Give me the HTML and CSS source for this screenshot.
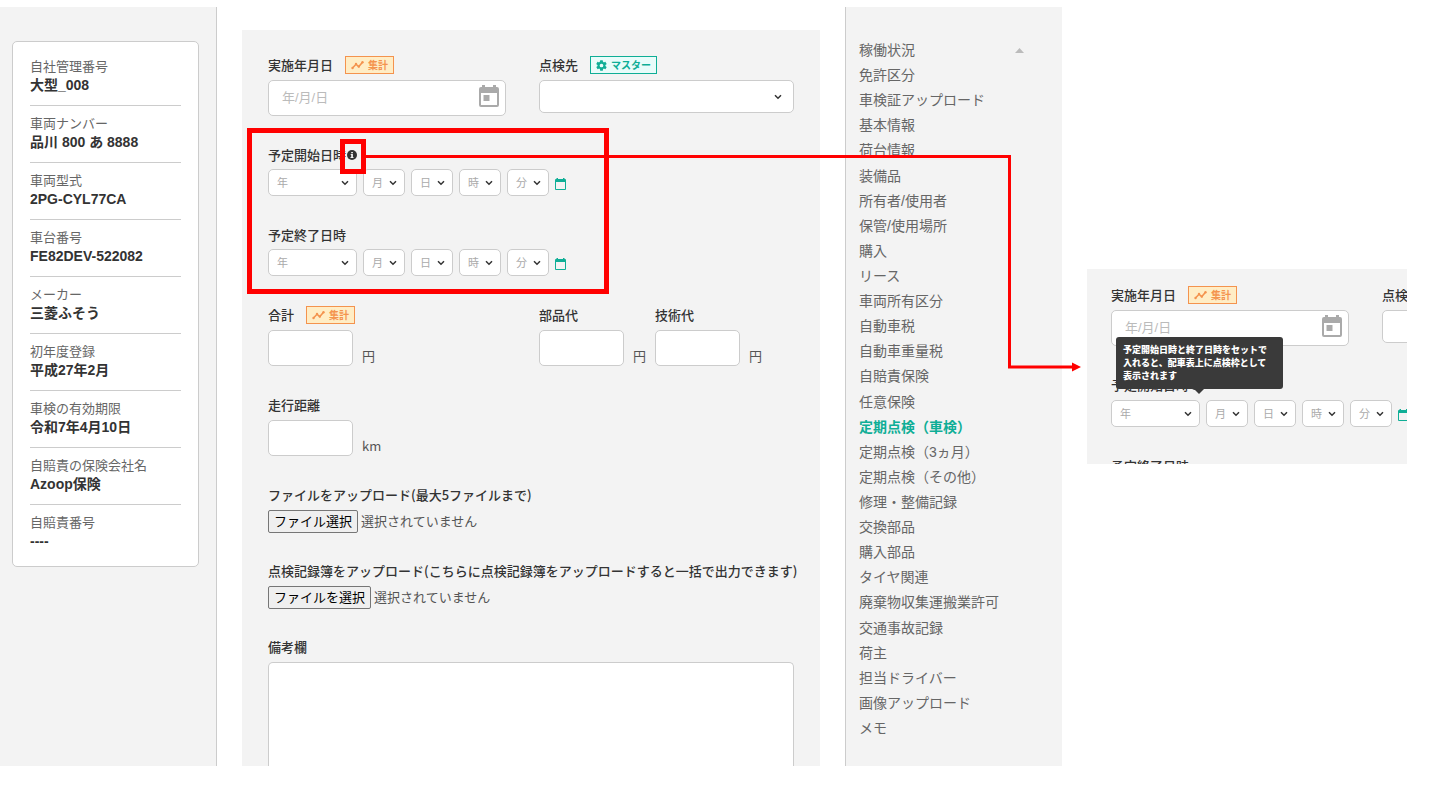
FILE: index.html
```html
<!DOCTYPE html>
<html lang="ja">
<head>
<meta charset="utf-8">
<meta name="viewport" content="width=device-width, initial-scale=1">
<title>定期点検（車検）</title>
<link rel="stylesheet" href="styles.css">
</head>
<body>
<svg class="sprite" aria-hidden="true">
  <symbol id="chevron" viewBox="0 0 8 6"><path d="M1 1.2 4 4.2 7 1.2" fill="none" stroke="currentColor" stroke-width="1.5"/></symbol>
  <symbol id="trend" viewBox="0 0 13 10"><path d="M1.5 8 5 4.2 7.8 6.6 11.5 2.2" fill="none" stroke="currentColor" stroke-width="1.5"/><circle cx="1.5" cy="8" r="1.2"/><circle cx="5" cy="4" r="1.2"/><circle cx="7.8" cy="6.6" r="1.2"/><circle cx="11.5" cy="2.2" r="1.2"/></symbol>
  <symbol id="gear" viewBox="2 2 20 20"><path d="M19.1 12.9a7 7 0 0 0 0-1.8l2-1.6a.5.5 0 0 0 .1-.6l-1.9-3.3a.5.5 0 0 0-.6-.2l-2.4 1a7 7 0 0 0-1.6-1l-.4-2.5a.5.5 0 0 0-.5-.4h-3.8a.5.5 0 0 0-.5.4l-.4 2.5a7 7 0 0 0-1.6 1l-2.4-1a.5.5 0 0 0-.6.2L2.700 8.900a.5.5 0 0 0 .1.600l2 1.600a7 7 0 0 0 0 1.800l-2 1.600a.5.5 0 0 0-.1.600l1.900 3.300c.1.200.4.300.6.200l2.400-1a7 7 0 0 0 1.600 1l.4 2.500c0 .2.200.4.500.4h3.800c.3 0 .5-.2.500-.4l.4-2.500a7 7 0 0 0 1.600-1l2.400 1c.2.1.5 0 .6-.2l1.900-3.300a.5.5 0 0 0-.1-.600zM12 15.400a3.400 3.400 0 1 1 0-6.800 3.400 3.400 0 0 1 0 6.800z"/></symbol>
  <symbol id="calendar" viewBox="0 0 20 22"><path fill-rule="evenodd" d="M3 0h3v2h8V0h3v2h1a2 2 0 0 1 2 2v16a2 2 0 0 1-2 2H2a2 2 0 0 1-2-2V4a2 2 0 0 1 2-2h1zM2 8v12h16V8z"/><path d="M4.500 10h6v6h-6z"/></symbol>
  <symbol id="calendar-small" viewBox="0 0 11 12"><path fill-rule="evenodd" d="M1.500 0h1.500v1h5V0h1.500v1h.5a1 1 0 0 1 1 1v9a1 1 0 0 1-1 1H1a1 1 0 0 1-1-1V2a1 1 0 0 1 1-1h.5zM1 4v7h9V4z"/></symbol>
  <symbol id="info" viewBox="0 0 10 10"><circle cx="5" cy="5" r="5"/><path d="M4.200 2h1.700v1.300H4.200zM3.700 4.100h2.200v3h.6V8h-3v-.9h.7V5h-.5z" fill="#f3f3f3"/></symbol>
</svg>

<div class="board">
  <aside class="summary">
    <dl class="card">
      <div class="fact"><dt>自社管理番号</dt><dd>大型_008</dd></div>
      <div class="fact"><dt>車両ナンバー</dt><dd>品川 800 あ 8888</dd></div>
      <div class="fact"><dt>車両型式</dt><dd>2PG-CYL77CA</dd></div>
      <div class="fact"><dt>車台番号</dt><dd>FE82DEV-522082</dd></div>
      <div class="fact"><dt>メーカー</dt><dd>三菱ふそう</dd></div>
      <div class="fact"><dt>初年度登録</dt><dd>平成27年2月</dd></div>
      <div class="fact"><dt>車検の有効期限</dt><dd>令和7年4月10日</dd></div>
      <div class="fact"><dt>自賠責の保険会社名</dt><dd>Azoop保険</dd></div>
      <div class="fact"><dt>自賠責番号</dt><dd>----</dd></div>
    </dl>
  </aside>

  <main class="panel">
    <form class="form">
      <div class="columns">
        <div class="field">
          <div class="head"><label for="date">実施年月日</label><span class="badge badge-sum"><svg><use href="#trend"/></svg>集計</span></div>
          <div class="date"><input id="date" type="text" placeholder="年/月/日"><button type="button" aria-label="カレンダーを開く"><svg><use href="#calendar"/></svg></button></div>
        </div>
        <div class="field">
          <div class="head"><label for="shop">点検先</label><span class="badge badge-master"><svg><use href="#gear"/></svg>マスター</span></div>
          <div class="pick pick-large"><select id="shop"><option></option></select><svg><use href="#chevron"/></svg></div>
        </div>
      </div>
      <div class="field field-tight">
        <div class="head"><label for="start-year">予定開始日時</label><svg class="info"><use href="#info"/></svg></div>
        <div class="datetime">
          <div class="pick pick-year"><select id="start-year"><option>年</option></select><svg><use href="#chevron"/></svg></div>
          <div class="pick"><select aria-label="開始月"><option>月</option></select><svg><use href="#chevron"/></svg></div>
          <div class="pick"><select aria-label="開始日"><option>日</option></select><svg><use href="#chevron"/></svg></div>
          <div class="pick"><select aria-label="開始時"><option>時</option></select><svg><use href="#chevron"/></svg></div>
          <div class="pick"><select aria-label="開始分"><option>分</option></select><svg><use href="#chevron"/></svg></div>
          <button class="open-calendar" type="button" aria-label="開始日時を選択"><svg><use href="#calendar-small"/></svg></button>
        </div>
      </div>
      <div class="field field-tight">
        <div class="head"><label for="end-year">予定終了日時</label></div>
        <div class="datetime">
          <div class="pick pick-year"><select id="end-year"><option>年</option></select><svg><use href="#chevron"/></svg></div>
          <div class="pick"><select aria-label="終了月"><option>月</option></select><svg><use href="#chevron"/></svg></div>
          <div class="pick"><select aria-label="終了日"><option>日</option></select><svg><use href="#chevron"/></svg></div>
          <div class="pick"><select aria-label="終了時"><option>時</option></select><svg><use href="#chevron"/></svg></div>
          <div class="pick"><select aria-label="終了分"><option>分</option></select><svg><use href="#chevron"/></svg></div>
          <button class="open-calendar" type="button" aria-label="終了日時を選択"><svg><use href="#calendar-small"/></svg></button>
        </div>
      </div>
      <div class="columns">
        <div class="field">
          <div class="head"><label for="total">合計</label><span class="badge badge-sum"><svg><use href="#trend"/></svg>集計</span></div>
          <div class="amount"><input id="total" type="text"><span>円</span></div>
        </div>
        <div class="costs">
          <div class="field">
            <div class="head"><label for="parts">部品代</label></div>
            <div class="amount"><input id="parts" type="text"><span>円</span></div>
          </div>
          <div class="field">
            <div class="head"><label for="labor">技術代</label></div>
            <div class="amount"><input id="labor" type="text"><span>円</span></div>
          </div>
        </div>
      </div>
      <div class="field">
        <div class="head"><label for="mileage">走行距離</label></div>
        <div class="amount"><input id="mileage" type="text"><span>km</span></div>
      </div>
      <div class="attachments">
        <div class="field">
          <div class="head"><label for="files">ファイルをアップロード(最大5ファイルまで)</label></div>
          <div class="file"><button id="files" type="button">ファイル選択</button><span>選択されていません</span></div>
        </div>
        <div class="field">
          <div class="head"><label for="record">点検記録簿をアップロード(こちらに点検記録簿をアップロードすると一括で出力できます)</label></div>
          <div class="file"><button id="record" type="button">ファイルを選択</button><span>選択されていません</span></div>
        </div>
        <div class="field notes">
          <div class="head"><label for="notes">備考欄</label></div>
          <textarea id="notes"></textarea>
        </div>
      </div>
    </form>
  </main>

  <nav class="menu">
    <ul>
      <li><a href="#">稼働状況</a><svg class="to-top" viewBox="0 0 9 5"><path d="M0 5 4.500 0 9 5z"/></svg></li>
      <li><a href="#">免許区分</a></li>
      <li><a href="#">車検証アップロード</a></li>
      <li><a href="#">基本情報</a></li>
      <li><a href="#">荷台情報</a></li>
      <li><a href="#">装備品</a></li>
      <li><a href="#">所有者/使用者</a></li>
      <li><a href="#">保管/使用場所</a></li>
      <li><a href="#">購入</a></li>
      <li><a href="#">リース</a></li>
      <li><a href="#">車両所有区分</a></li>
      <li><a href="#">自動車税</a></li>
      <li><a href="#">自動車重量税</a></li>
      <li><a href="#">自賠責保険</a></li>
      <li><a href="#">任意保険</a></li>
      <li><a class="current" href="#">定期点検（車検）</a></li>
      <li><a href="#">定期点検（3ヵ月）</a></li>
      <li><a href="#">定期点検（その他）</a></li>
      <li><a href="#">修理・整備記録</a></li>
      <li><a href="#">交換部品</a></li>
      <li><a href="#">購入部品</a></li>
      <li><a href="#">タイヤ関連</a></li>
      <li><a href="#">廃棄物収集運搬業許可</a></li>
      <li><a href="#">交通事故記録</a></li>
      <li><a href="#">荷主</a></li>
      <li><a href="#">担当ドライバー</a></li>
      <li><a href="#">画像アップロード</a></li>
      <li><a href="#">メモ</a></li>
    </ul>
  </nav>

  <section class="detail">
    <div class="form">
      <div class="columns">
        <div class="field">
          <div class="head"><label for="date2">実施年月日</label><span class="badge badge-sum"><svg><use href="#trend"/></svg>集計</span></div>
          <div class="date"><input id="date2" type="text" placeholder="年/月/日"><button type="button" aria-label="カレンダーを開く"><svg><use href="#calendar"/></svg></button></div>
        </div>
        <div class="field">
          <div class="head"><label for="shop2">点検先</label></div>
          <div class="pick pick-large"><select id="shop2"><option></option></select></div>
        </div>
      </div>
      <div class="field">
        <div class="head"><label for="start-year2">予定開始日時</label><svg class="info"><use href="#info"/></svg>
          <div class="tooltip" role="tooltip">予定開始日時と終了日時をセットで<br>入れると、配車表上に点検枠として<br>表示されます</div>
        </div>
        <div class="datetime">
          <div class="pick pick-year"><select id="start-year2"><option>年</option></select><svg><use href="#chevron"/></svg></div>
          <div class="pick"><select aria-label="開始月"><option>月</option></select><svg><use href="#chevron"/></svg></div>
          <div class="pick"><select aria-label="開始日"><option>日</option></select><svg><use href="#chevron"/></svg></div>
          <div class="pick"><select aria-label="開始時"><option>時</option></select><svg><use href="#chevron"/></svg></div>
          <div class="pick"><select aria-label="開始分"><option>分</option></select><svg><use href="#chevron"/></svg></div>
          <button class="open-calendar" type="button" aria-label="開始日時を選択"><svg><use href="#calendar-small"/></svg></button>
        </div>
      </div>
      <div class="field">
        <div class="head"><span>予定終了日時</span></div>
      </div>
    </div>
  </section>

  <svg class="callout" aria-hidden="true">
    <path d="M249.500 123.500h357v161h-357z" stroke-width="5"/>
    <path d="M342.500 134.500h21v30h-21z" stroke-width="5"/>
    <path d="M366 149.500h643.500v210.500H1074" stroke-width="3"/>
    <path class="tip" d="M1072 355.500 1081 360l-9 4.500z"/>
  </svg>
</div>
</body>
</html>
```
FILE: styles.css
```css
* { box-sizing: border-box; }

body {
  margin: 0;
  background: #fff;
  color: #333;
  font-family: "Liberation Sans", "Noto Sans CJK JP", sans-serif;
  font-size: 13px;
  line-height: 20px;
}

input, select, textarea, button { font: inherit; margin: 0; }

.sprite { position: absolute; width: 0; height: 0; }
svg { display: block; fill: currentColor; flex: none; }

.board {
  position: relative;
  display: grid;
  grid-template-columns: 217px minmax(0, 1fr) 217px 320px;
  column-gap: 25px;
  height: calc(100vh - 47px);
  min-height: 720px;
  margin: 7px 0 40px;
  padding-right: 44px;
}

/* vehicle summary */
.summary {
  padding: 34px 17px 0 12px;
  background: #f3f3f3;
  border-right: 1px solid #ccc;
}
.card {
  margin: 0;
  padding: 7px 17px 5px;
  background: #fff;
  border: 1px solid #ccc;
  border-radius: 5px;
}
.fact {
  padding: 8px 0 10px;
  border-bottom: 1px solid #ccc;
  line-height: 19px;
}
.fact:last-child { border-bottom: 0; }
.fact dt { color: #666; }
.fact dd { margin: 0; font-size: 14px; font-weight: 600; }

/* form */
.panel {
  display: flex;
  margin-top: 23px;
  padding: 25px 26px 0;
  background: #f3f3f3;
  overflow: hidden;
}
.form {
  flex: 1;
  display: flex;
  flex-direction: column;
  gap: 29px;
  min-width: 0;
}
.columns { display: grid; grid-template-columns: 271fr 255fr; }
.costs { display: flex; gap: 9px; }
.field { display: flex; flex-direction: column; gap: 5px; }
.field-tight { gap: 4px; }
.head {
  position: relative;
  display: flex;
  align-items: center;
  height: 20px;
  font-family: "Noto Sans CJK JP", sans-serif;
  font-weight: 500;
  white-space: nowrap;
}
.info { width: 10px; height: 10px; margin-left: 1px; }

.badge {
  display: flex;
  align-items: center;
  gap: 4px;
  height: 18px;
  margin-left: 12px;
  padding: 0 5px;
  border: 1px solid;
  font-size: 10px;
  font-weight: 700;
  line-height: 16px;
}
.badge-sum { color: #f4934e; background: #ffedc5; }
.badge-sum svg { width: 13px; height: 10px; }
.badge-master { color: #0fae96; background: #e9fcfa; }
.badge-master svg { width: 11px; height: 11px; }

.date {
  display: flex;
  align-items: center;
  height: 36px;
  margin-right: 33px;
  padding: 0 6px 4px 13px;
  background: #fff;
  border: 1px solid #ccc;
  border-radius: 5px;
}
.date input {
  flex: 1;
  min-width: 0;
  padding: 4px 0 0;
  border: 0;
  background: none;
}
.date input::placeholder { color: #bbb; opacity: 1; }
.date button { padding: 0; border: 0; background: none; color: #aaa; }
.date svg { width: 20px; height: 22px; }

.pick { position: relative; width: 42px; height: 27px; color: #333; }
.pick select {
  width: 100%;
  height: 100%;
  padding: 0 0 0 8px;
  appearance: none;
  background: #fff;
  border: 1px solid #ccc;
  border-radius: 5px;
  color: #aaa;
  font-size: 11px;
}
.pick svg {
  position: absolute;
  right: 8px;
  top: 11px;
  width: 8px;
  height: 6px;
  pointer-events: none;
}
.pick-year { width: 89px; }
.pick-large { width: auto; height: 33px; }
.pick-large svg { right: 12px; top: 14px; }
.datetime { display: flex; gap: 6px; }
.open-calendar {
  align-self: center;
  padding: 2px 0 0;
  border: 0;
  background: none;
  color: #0fae96;
}
.open-calendar svg { width: 11px; height: 12px; }

.amount {
  display: flex;
  align-items: flex-end;
  gap: 9px;
  color: #555;
  font-family: "Noto Sans CJK JP", sans-serif;
}
.amount input {
  width: 85px;
  height: 36px;
  background: #fff;
  border: 1px solid #ccc;
  border-radius: 5px;
}

.attachments { flex: 1; display: flex; flex-direction: column; gap: 28px; }
.file { display: flex; align-items: center; gap: 3px; color: #555; }
.file button {
  height: 23px;
  padding: 0 5px;
  background: #efefef;
  border: 1px solid #767676;
  border-radius: 2px;
  color: #000;
  line-height: 20px;
}
.notes { flex: 1; }
.notes textarea {
  flex: 1;
  width: 100%;
  background: #fff;
  border: 1px solid #ccc;
  border-bottom: 0;
  border-radius: 5px 5px 0 0;
  resize: none;
}

/* section menu */
.menu {
  padding: 31px 38px 26px 13px;
  background: #f3f3f3;
  border-left: 1px solid #ccc;
}
.menu ul {
  display: flex;
  flex-direction: column;
  justify-content: space-between;
  height: 100%;
  margin: 0;
  padding: 0;
  list-style: none;
}
.menu li {
  display: flex;
  align-items: center;
  justify-content: space-between;
  line-height: 24px;
}
.menu a { color: #666; font-size: 14px; text-decoration: none; }
.menu .current { color: #0fae96; font-weight: 700; }
.to-top { width: 9px; height: 5px; color: #bbb; }

/* enlarged detail with the hint open */
.detail {
  align-self: start;
  height: 195px;
  margin-top: 262px;
  padding: 16px 0 0 24px;
  background: #f3f3f3;
  overflow: hidden;
}
.detail .form { width: 526px; }
.tooltip {
  position: absolute;
  left: 5px;
  bottom: 6px;
  padding: 6px 16px 7px 7px;
  background: #3a3a3a;
  border-radius: 3px;
  color: #fff;
  font-size: 9px;
  font-weight: 900;
  line-height: 13px;
}
.tooltip::after {
  content: "";
  position: absolute;
  left: 78px;
  top: 100%;
  border: 5px solid transparent;
  border-top-color: #3a3a3a;
  border-bottom: 0;
}

.callout {
  position: absolute;
  inset: 0;
  width: 100%;
  height: 100%;
  fill: none;
  stroke: #f00;
  pointer-events: none;
}
.callout .tip { fill: #f00; stroke: none; }
```
